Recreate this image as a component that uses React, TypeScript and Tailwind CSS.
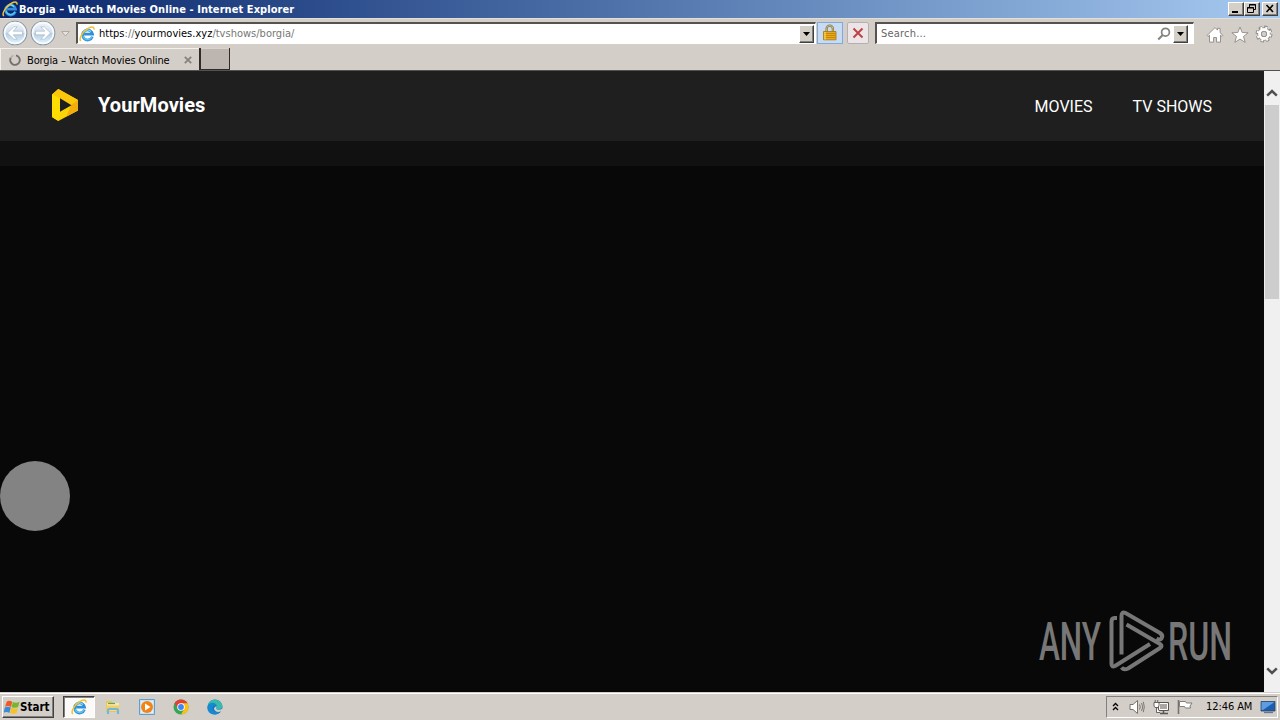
import React from "react";

const UI = "font-['DejaVu_Sans_Condensed','DejaVu_Sans',sans-serif] [font-stretch:condensed]";
const RAISED =
  "border border-t-white border-l-white border-r-[#404040] border-b-[#404040] shadow-[inset_-1px_-1px_0_#808080]";

function IeIcon({ className }: { className: string }) {
  return (
    <svg viewBox="0 0 16 16" className={className}>
      <path d="M13.4 10.6A5 5 0 1 1 13.6 8.2H5.2" fill="none" stroke="#2f8fd8" strokeWidth="2.7" />
      <path d="M13 10.8A4.8 4.8 0 0 1 4 9.8" fill="none" stroke="#5cc6f2" strokeWidth="1.3" />
      <path d="M4.5 6.4A4.4 4.4 0 0 1 12 5.6" fill="none" stroke="#7fd8f8" strokeWidth="1.1" />
      <path d="M2 14.9C-.5 13.5 2.5 7.2 8 3.2 12 .4 15.4.2 15 3.6" fill="none" stroke="#f2c230" strokeWidth="1.5" />
    </svg>
  );
}

function NavCircle({ flip, id }: { flip?: boolean; id: string }) {
  return (
    <svg viewBox="0 0 26 26" className={flip ? "size-[26px] -scale-x-100" : "size-[26px]"}>
      <defs>
        <linearGradient id={id} x1="0" y1="0" x2="0" y2="1">
          <stop offset="0" stopColor="#f4f7fa" />
          <stop offset=".48" stopColor="#d3dfeb" />
          <stop offset=".52" stopColor="#b7cde1" />
          <stop offset="1" stopColor="#e8f8ff" />
        </linearGradient>
      </defs>
      <circle cx="13" cy="13" r="11.8" fill={`url(#${id})`} stroke="#8798a8" strokeWidth="1.1" />
      <circle cx="13" cy="13" r="10.4" fill="none" stroke="#f5fbff" strokeWidth="1.6" />
      <path d="M5.5 13l6.3-6.2h3.4l-4 4.4h9.3v3.6h-9.3l4 4.4h-3.4z" fill="#fff" stroke="#9bb2c8" strokeWidth=".6" />
    </svg>
  );
}

function DropButton() {
  return (
    <div className={`flex h-[18px] w-[15px] items-center justify-center bg-[#d4d0c8] ${RAISED}`}>
      <svg viewBox="0 0 7 4" className="h-1 w-[7px]">
        <path d="M0 0h7L3.5 4z" fill="#000" />
      </svg>
    </div>
  );
}

function TitleBar() {
  return (
    <div className="flex h-[18px] items-center bg-gradient-to-r from-[#0a246a] to-[#a6caf0] pr-[2px] pl-[2px]">
      <IeIcon className="size-4" />
      <span className={`ml-px pt-px text-[11px] leading-[17px] font-bold tracking-[0.07px] whitespace-nowrap text-white ${UI}`}>
        Borgia – Watch Movies Online - Internet Explorer
      </span>
      <div className="ml-auto flex">
        <div className={`flex h-[14px] w-4 bg-[#d4d0c8] ${RAISED}`}>
          <svg viewBox="0 0 14 12" className="h-3 w-[14px]">
            <path d="M3 8h6v2H3z" />
          </svg>
        </div>
        <div className={`flex h-[14px] w-4 bg-[#d4d0c8] ${RAISED}`}>
          <svg viewBox="0 0 14 12" className="h-3 w-[14px]">
            <path d="M4.5 4.5V1.5h6v5h-2M4 2h7" fill="none" stroke="#000" />
            <path d="M2.5 4.5h6v5h-6zM2 5h7" fill="none" stroke="#000" />
          </svg>
        </div>
        <div className={`ml-[2px] flex h-[14px] w-4 bg-[#d4d0c8] ${RAISED}`}>
          <svg viewBox="0 0 14 12" className="h-3 w-[14px]">
            <path d="M3.5 2l6.5 7M10 2L3.5 9" stroke="#000" strokeWidth="1.6" />
          </svg>
        </div>
      </div>
    </div>
  );
}

function Toolbar() {
  return (
    <div className="flex h-[30px] items-start border-t border-[#e2ded8] bg-[#d4cec8] pl-[2px]">
      <div className="mt-px flex gap-[2px]">
        <NavCircle id="nav-back" />
        <NavCircle id="nav-forward" flip />
      </div>
      <svg viewBox="0 0 9 6" className="mt-3 ml-[5px] h-[6px] w-[9px]">
        <path d="M.7.5h7.6L4.5 5z" fill="#e6e2de" stroke="#aaa59f" strokeWidth=".9" />
      </svg>
      <div className="mt-[3px] ml-[6px] flex h-[22px] w-[740px] items-center border-t-2 border-r border-b border-l-2 border-t-[#55524f] border-r-white border-b-white border-l-[#55524f] bg-white">
        <IeIcon className="ml-px size-4" />
        <span className={`mt-px ml-1 text-[11px] leading-4 tracking-[0.01px] whitespace-nowrap text-[#777] ${UI}`}>
          <span className="text-black">https</span>://<span className="text-black">yourmovies.xyz</span>/tvshows/borgia/
        </span>
        <div className="mr-px ml-auto">
          <DropButton />
        </div>
      </div>
      <div className="mt-[3px] ml-px flex h-[22px] w-[26px] justify-center border border-[#82a9db] bg-[#c7dcf3]">
        <svg viewBox="0 0 16 18" className="mt-px h-[18px] w-4">
          <path d="M4.6 8V4.7a3.1 3.1 0 0 1 6.3 0V8" fill="none" stroke="#8a7847" strokeWidth="2.3" />
          <path d="M4.6 8V4.7a3.1 3.1 0 0 1 6.3 0V8" fill="none" stroke="#d9c88c" strokeWidth=".8" />
          <path d="M1.5 7.5h12.500v8.300H1.500z" fill="#e8a91c" stroke="#a87508" strokeWidth=".8" />
          <path d="M2 9.500h11.500M2 11.500h11.500M2 13.500h11.500" stroke="#bd8209" strokeWidth=".8" />
          <path d="M3 8v7.500" stroke="#ffda65" strokeWidth="1.2" />
        </svg>
      </div>
      <div className="mt-[3px] ml-1 flex h-[22px] w-[22px] items-center justify-center rounded-[2px] border border-[#b5afb0] bg-[#ebe5e7]">
        <svg viewBox="0 0 12 12" className="size-3">
          <path d="M1.500 1.500l9 9M10.500 1.500l-9 9" stroke="#bd4347" strokeWidth="2" />
        </svg>
      </div>
      <div className="mt-[3px] ml-[6px] flex h-[22px] w-[319px] items-center border-t-2 border-r border-b border-l-2 border-t-[#55524f] border-r-white border-b-white border-l-[#55524f] bg-white">
        <span className={`mt-px ml-1 text-[11px] leading-4 tracking-[0.2px] text-[#666] ${UI}`}>Search...</span>
        <svg viewBox="0 0 14 14" className="mr-[2px] ml-auto size-[14px]">
          <circle cx="8.500" cy="5.200" r="3.900" fill="none" stroke="#86817d" strokeWidth="1.700" />
          <path d="M5.700 8L1.200 12.500" stroke="#86817d" strokeWidth="2" />
        </svg>
        <div className="mr-[5px]">
          <DropButton />
        </div>
      </div>
      <svg viewBox="0 0 18 18" className="mt-[7px] ml-3 size-[18px]">
        <path d="M1 9.500L9 1.600l2.500 2.500V2.300h2.600v4.400L17 9.500l-1 1-1.500-1.300v6.900h-4v-4.600H7.600v4.600H3.500V9.200L2 10.500z" fill="#fff" stroke="#8f8984" strokeWidth=".9" />
      </svg>
      <svg viewBox="0 0 18 18" className="mt-[7px] ml-[7px] size-[18px]">
        <path d="M9 1l2.200 5.500 5.900.3-4.600 3.700 1.700 5.900L9 13.100l-5.200 3.300 1.700-5.900L.9 6.800l5.900-.3z" fill="#fff" stroke="#8f8984" strokeWidth=".9" />
      </svg>
      <svg viewBox="0 0 18 18" className="mt-[6px] ml-[6px] size-[18px]">
        <circle cx="9" cy="9" r="6.600" fill="none" stroke="#8f8984" strokeWidth="3.700" strokeDasharray="3.100 2.083" />
        <circle cx="9" cy="9" r="4.600" fill="none" stroke="#8f8984" strokeWidth="4.200" />
        <circle cx="9" cy="9" r="6.400" fill="none" stroke="#fff" strokeWidth="2.200" strokeDasharray="1.900 3.126" strokeDashoffset="-.55" />
        <circle cx="9" cy="9" r="4.500" fill="none" stroke="#fff" strokeWidth="2.800" />
        <circle cx="9" cy="9" r="2.700" fill="#d4cec8" stroke="#8f8984" strokeWidth=".8" />
      </svg>
    </div>
  );
}

function TabRow() {
  return (
    <div className="flex h-[23px] items-start border-b border-[#55514d] bg-[#d4cec8]">
      <div className="flex h-[22px] w-[199px] items-center border-t border-l border-[#f3f0ed] pl-2">
        <svg viewBox="0 0 12 12" className="mt-px size-3">
          <path d="M7 1.400A4.800 4.800 0 1 1 1.800 3.800" fill="none" stroke="#75716f" strokeWidth="1.900" />
          <path d="M1.800 3.800A4.800 4.800 0 0 1 4.500 1.400" fill="none" stroke="#b6b1ac" strokeWidth="1.600" />
        </svg>
        <span className={`mt-[2px] ml-[6px] text-[11px] leading-4 tracking-[-0.14px] whitespace-nowrap text-black ${UI}`}>
          Borgia – Watch Movies Online
        </span>
        <svg viewBox="0 0 8 8" className="mt-px mr-[7px] ml-auto size-2">
          <path d="M.8.8l6.400 6.400M7.200.8L.8 7.200" stroke="#87827e" strokeWidth="1.800" />
        </svg>
      </div>
      <div className="h-[22px] w-[31px] border-r border-b border-l-2 border-[#2e2b29] bg-[#bdb6b0] shadow-[inset_0_1px_0_#d8d3ce]" />
    </div>
  );
}

function Logo() {
  return (
    <svg viewBox="0 0 28 34" className="-mt-[2px] h-[34px] w-7">
      <path d="M1 6.500L7.300 1 27 12v10.500L7.300 33 1 29z" fill="#f9d507" />
      <path d="M7.300 1L27 12l-7.500 5.100L9 10.500 1 6.500z" fill="#fbc70b" />
      <path d="M27 12v10.500L15.500 28.600 20 17z" fill="#f3ae0e" />
      <path d="M1 6.500L9 10.500v13L7.300 33 1 29z" fill="#ffdd00" />
      <path d="M9 10.300l11.500 6.900L9 23.800z" fill="#1f1f1f" />
    </svg>
  );
}

function Watermark() {
  return (
    <svg viewBox="0 0 212 70" className="h-[70px] w-[212px] overflow-visible">
      <g fill="#777" fontFamily="Roboto, sans-serif" fontSize="53.500" fontWeight="500">
        <text x="4" y="54" textLength="62" lengthAdjust="spacingAndGlyphs">ANY</text>
        <text x="133" y="54" textLength="64" lengthAdjust="spacingAndGlyphs">RUN</text>
      </g>
      <g fill="none" stroke="#777" strokeWidth="4" strokeLinejoin="round">
        <path d="M82 12h-2.500q-3 0-3 4V58q0 3.500 3.500 2L115 38" />
        <path d="M86.500 48.500V10q0-5 4-3l34.500 20q3.500 2.500 1.500 5.500-2 2-5 0" />
        <path d="M91.500 18.500l33.500 19.500q3 2 0 4L93 62.500q-4 2-6.500-1" />
      </g>
    </svg>
  );
}

function Chevron({ down }: { down?: boolean }) {
  return (
    <svg viewBox="0 0 12 8" className={down ? "h-2 w-3 rotate-180" : "h-2 w-3"}>
      <path d="M1.200 6.700L6 2l4.800 4.700" fill="none" stroke="#505050" strokeWidth="2.500" />
    </svg>
  );
}

function Page() {
  return (
    <div className="flex h-[621px]">
      <main className="relative flex w-[1264px] flex-col bg-[#080808] font-[Roboto,sans-serif]">
        <header className="flex h-[70px] items-center bg-[#1f1f1f] pr-[52px] pl-[51px] text-white">
          <Logo />
          <span className="-mt-[2px] ml-[19px] text-[20px] leading-6 font-bold tracking-[0.07px]">YourMovies</span>
          <nav className="mt-[2px] ml-auto flex gap-10 text-[16px] leading-6">
            <span>MOVIES</span>
            <span>TV SHOWS</span>
          </nav>
        </header>
        <div className="h-[25px] bg-[#111]" />
        <div className="mt-[295px] size-[70px] rounded-full bg-[#838383]" />
        <div className="absolute top-[535px] left-[1035px]">
          <Watermark />
        </div>
      </main>
      <div className="flex w-4 flex-col items-center bg-[#f0f0f0]">
        <div className="flex h-[34px] items-center pt-[9px]">
          <Chevron />
        </div>
        <div className="h-[194px] w-[14px] bg-[#cdcdcd]" />
        <div className="mt-auto mb-[17px] flex">
          <Chevron down />
        </div>
      </div>
    </div>
  );
}

function Taskbar() {
  return (
    <div className="flex h-7 items-start border-t border-[#d4cec8] bg-[#d4cec8] shadow-[inset_0_1px_0_#fff]">
      <div className={`mt-[3px] ml-[2px] flex h-[22px] w-[52px] items-center pl-px ${RAISED}`}>
        <svg viewBox="0 0 16 16" className="size-4">
          <path d="M2.800 2.500Q5.200.7 8.300 2.700L7 8Q4 6 1 7.800z" fill="#ee5b25" />
          <path d="M8.900 3q3.200 1.600 6.600-.2l-1.400 5.200q-3.200 1.600-6.500-.1z" fill="#75b62c" />
          <path d="M.8 8.500q3-1.700 6 .1l-1.400 5.300Q2.800 12.200-.4 13.800z" fill="#398bd4" />
          <path d="M7.400 8.800q3.300 1.600 6.500.1l-1.400 5.200q-3.200 1.500-6.500-.1z" fill="#f8c126" />
        </svg>
        <span className={`mt-px text-[11.500px] font-bold text-black ${UI}`}>Start</span>
      </div>
      <div className="mt-[3px] ml-[9px] flex h-[22px] w-8 items-center justify-center border border-t-[#404040] border-r-white border-b-white border-l-[#404040] bg-[#fbfaf9] shadow-[inset_1px_1px_0_#808080]">
        <IeIcon className="size-4" />
      </div>
      <svg viewBox="0 0 16 16" className="mt-[6px] ml-[10px] size-4">
        <path d="M1 2h6l1 2h6v9H1z" fill="#e8c65c" />
        <path d="M2 4h12v8H2z" fill="#f8e8a5" />
        <path d="M3 4.500h7" stroke="#55a95c" strokeWidth="1.200" />
        <path d="M1.500 6.500h13v5h-13z" fill="#efcf6c" />
        <path d="M3 15v-3.500q0-1.500 1.500-1.500h7q1.500 0 1.500 1.500V15" fill="none" stroke="#72b7dd" strokeWidth="2.200" />
      </svg>
      <svg viewBox="0 0 16 16" className="mt-[6px] ml-[18px] size-4">
        <path d="M.5.5h15v15H.5z" fill="#c5e0f3" stroke="#5ba0cf" />
        <path d="M2 2h12v12H2z" fill="#deedf8" />
        <circle cx="8" cy="8" r="6" fill="#f28415" />
        <path d="M6 4.500L11.500 8 6 11.500z" fill="#fff" />
      </svg>
      <svg viewBox="0 0 16 16" className="mt-[6px] ml-[18px] size-4">
        <circle cx="8" cy="8" r="7.500" fill="#35a653" />
        <path d="M8 8L1.500 4.250A7.500 7.500 0 0 1 14.500 4.250z" fill="#e34133" />
        <path d="M8 4.250h6.500A7.500 7.500 0 0 1 8 15.500L11.200 9.900z" fill="#fbc116" />
        <path d="M1.500 4.250L5 10 8 8V4z" fill="#e34133" />
        <circle cx="8" cy="8" r="3.800" fill="#fff" />
        <circle cx="8" cy="8" r="2.900" fill="#4285f4" />
      </svg>
      <svg viewBox="0 0 16 16" className="mt-[6px] ml-[18px] size-4">
        <circle cx="8" cy="8" r="7.500" fill="#1476c6" />
        <path d="M.8 6.500C2-.5 12.500-1.500 15.300 6c.8 3-2 5.500-5.500 4.200-1.500-.6.500-1.500 0-3C8.800 4 3.500 3.600.8 6.500z" fill="#38bbaa" />
        <path d="M.8 6.500C4 1.500 10 4 9.800 7.500 8 5.500 5.500 7 5.300 9.500c0 3 4 4.500 8.500 3C9 18-.5 15.500.5 8z" fill="#168ad1" />
        <path d="M9.500 7.300c.5 1.500-1.300 2.200.5 3.100 2.300.8 4 .3 5-.6l.6 1.800-2.400 1.200C9.200 13.500 7 11.500 7 9.500q.5-2 2.500-2.200z" fill="#d4cec8" />
      </svg>
      <div className="mt-[3px] mr-[2px] ml-auto flex h-[22px] w-[172px] items-center border border-t-[#808080] border-r-white border-b-white border-l-[#808080] pl-[5px]">
        <svg viewBox="0 0 7 9" className="mb-[2px] h-[9px] w-[7px]">
          <path d="M1 4l2.500-2.500L6 4M1 8l2.500-2.500L6 8" fill="none" stroke="#000" strokeWidth="1.300" />
        </svg>
        <svg viewBox="0 0 16 16" className="ml-[10px] size-4">
          <path d="M1 5.500h3L8.500 1.500v13L4 10.500H1z" fill="#fff" stroke="#77726e" />
          <path d="M10.500 5.500q1.500 2.500 0 5M12.500 4q2.500 4 0 8M14.300 2.800q2 5 0 10.400" fill="none" stroke="#7d7772" strokeWidth="1" />
        </svg>
        <svg viewBox="0 0 17 16" className="ml-2 h-4 w-[17px]">
          <path d="M5.500 3.500h10v8h-10z" fill="#aaa6a1" stroke="#595653" />
          <path d="M6.500 4.500h8v6h-8z" fill="none" stroke="#fff" />
          <path d="M10.500 12v2.500M7 14.500h8" stroke="#595653" strokeWidth="1.500" />
          <path d="M1 3.500h5V7L5 8.500H2L1 7zM2.200 1v2M4.700 1v2M3.500 8.500v5H7" fill="#fff" stroke="#595653" strokeWidth=".9" />
        </svg>
        <svg viewBox="0 0 16 16" className="ml-[7px] size-4">
          <path d="M1.500 1v14" stroke="#77726e" strokeWidth="1.600" />
          <path d="M2.500 2.500h6l1 1.500H15L13 7l.500 2H8.500l-1-1.500h-5z" fill="#fff" stroke="#77726e" strokeWidth=".9" />
        </svg>
        <span className={`mt-px ml-[13px] text-[11px] tracking-[-0.08px] whitespace-nowrap text-black ${UI}`}>12:46 AM</span>
        <svg viewBox="0 0 16 16" className="mr-px ml-auto size-4">
          <path d="M1 2.500h14v9.500H1z" fill="#1d5daf" stroke="#30445f" strokeWidth=".8" />
          <path d="M1.500 3h13L3 11H1.500z" fill="#5b9de0" />
          <path d="M4 13.500h9" stroke="#607891" strokeWidth="1.300" />
        </svg>
      </div>
    </div>
  );
}

export default function App() {
  return (
    <div className="flex h-[720px] w-[1280px] flex-col overflow-hidden bg-[#d4cec8]">
      <TitleBar />
      <Toolbar />
      <TabRow />
      <Page />
      <Taskbar />
    </div>
  );
}
